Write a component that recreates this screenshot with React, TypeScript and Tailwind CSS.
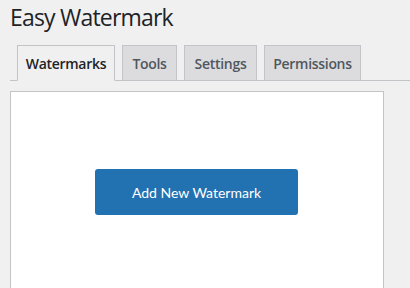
import React from 'react';

const tabs = [
  { name: 'Watermarks', w: 'w-[98px]', active: true },
  { name: 'Tools', w: 'w-[55px]', active: false },
  { name: 'Settings', w: 'w-[73px]', active: false },
  { name: 'Permissions', w: 'w-[97px]', active: false },
];

export default function App() {
  return (
    <div className="h-[288px] overflow-hidden bg-[#f0f0f1] pl-[10px] font-['Open_Sans',sans-serif] text-[#1d2327]">
      <h1 className="pt-[2px] text-[23px] leading-[30px] font-normal tracking-[-0.8px]">Easy Watermark</h1>

      <div className="mt-[13px] flex gap-[7px] border-b border-[#c3c4c7] pl-[7px]">
        {tabs.map((tab) => (
          <div
            key={tab['name']}
            className={`${tab.w} -mb-px flex h-[36px] items-center justify-center border border-[#c3c4c7] text-[14px] font-semibold tracking-[-0.3px] ${
              tab.active ? 'border-b-[#f0f0f1] bg-[#f0f0f1] text-[#1d2327]' : 'bg-[#dcdcde] text-[#50575e]'
            }`}
          >
            {tab['name']}
          </div>
        ))}
      </div>

      <div className="mt-[10px] flex h-[220px] w-[374px] justify-center border border-[#c3c4c7] bg-white pr-px pt-[77px]">
        <button className="h-[46px] w-[203px] rounded-[3px] bg-[#2271b1] font-['Lato',sans-serif] text-[14px] text-white">
          Add New Watermark
        </button>
      </div>
    </div>
  );
}
